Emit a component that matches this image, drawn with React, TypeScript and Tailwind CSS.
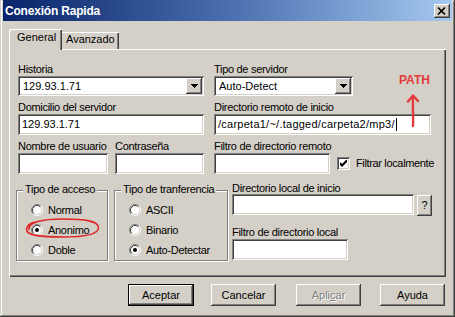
import React from "react";

const RAISED =
  "shadow-[inset_-1px_-1px_0_#404040,inset_1px_1px_0_#ffffff,inset_-2px_-2px_0_#808080,inset_2px_2px_0_#d4d0c8]";
const SUNKEN =
  "shadow-[inset_1px_1px_0_#808080,inset_-1px_-1px_0_#ffffff,inset_2px_2px_0_#404040,inset_-2px_-2px_0_#d4d0c8]";

function Label({ children, cls = "" }: { children: React.ReactNode; cls?: string }) {
  return (
    <div className={`h-[13px] leading-[13px] tracking-[-0.3px] whitespace-nowrap ${cls}`}>{children}</div>
  );
}

function Input({ cls, children }: { cls: string; children?: React.ReactNode }) {
  return (
    <div className={`h-[21px] bg-white ${SUNKEN} flex items-center pl-[4px] whitespace-nowrap overflow-hidden ${cls}`}>
      {children}
    </div>
  );
}

function DropBtn() {
  return (
    <div className={`w-[16px] h-[16px] bg-[#d4d0c8] ${RAISED} flex items-center justify-center shrink-0`}>
      <svg width="7" height="4" viewBox="0 0 7 4">
        <path d="M0 0H7V1H6V2H5V3H4V4H3V3H2V2H1V1H0Z" fill="#000" />
      </svg>
    </div>
  );
}

function Combo({ cls, value }: { cls: string; value: string }) {
  return (
    <div className={`h-[20px] bg-white ${SUNKEN} flex items-center p-[2px] ${cls}`}>
      <span className="flex-1 pl-[3px] whitespace-nowrap leading-[13px]">{value}</span>
      <DropBtn />
    </div>
  );
}

function Radio({ checked }: { checked?: boolean }) {
  return (
    <svg width="12" height="12" viewBox="0 0 12 12" className="shrink-0">
      <circle cx="6" cy="6" r="5" fill="#ffffff" />
      <path d="M9.89 2.11 A5.5 5.5 0 0 0 2.11 9.89" fill="none" stroke="#808080" strokeWidth="1" />
      <path d="M2.11 9.89 A5.5 5.5 0 0 0 9.89 2.11" fill="none" stroke="#ffffff" strokeWidth="1" />
      <path d="M9.18 2.82 A4.5 4.5 0 0 0 2.82 9.18" fill="none" stroke="#404040" strokeWidth="1" />
      <path d="M2.82 9.18 A4.5 4.5 0 0 0 9.18 2.82" fill="none" stroke="#d4d0c8" strokeWidth="1" />
      {checked && <circle cx="6" cy="6" r="2" fill="#000" />}
    </svg>
  );
}

function Group({
  cls,
  caption,
  items,
}: {
  cls: string;
  caption: string;
  items: { label: string; checked?: boolean }[];
}) {
  return (
    <div
      className={`relative mt-[8px] h-[71px] border border-[#808080] shadow-[inset_1px_1px_0_#ffffff,1px_1px_0_#ffffff] flex flex-col pt-[9px] pl-[14px] ${cls}`}
    >
      <div className="absolute left-[6px] top-[-8px] px-[2px] bg-[#d4d0c8] leading-[13px] tracking-[-0.3px] whitespace-nowrap">
        {caption}
      </div>
      {items.map((it) => (
        <div key={it.label} className="h-[20px] flex items-center gap-[5px] tracking-[-0.3px] whitespace-nowrap">
          <Radio checked={it.checked} />
          <span className="leading-[13px]">{it.label}</span>
        </div>
      ))}
    </div>
  );
}

function Btn({
  children,
  cls,
  def,
}: {
  children: React.ReactNode;
  cls: string;
  def?: boolean;
}) {
  if (def) {
    return (
      <div className={`h-[22px] border border-black ${cls}`}>
        <div className={`w-full h-full ${RAISED} flex items-center justify-center leading-[13px]`}>{children}</div>
      </div>
    );
  }
  return (
    <div className={`h-[22px] ${RAISED} flex items-center justify-center leading-[13px] ${cls}`}>{children}</div>
  );
}

export default function App() {
  return (
    <div
      className={`w-[455px] h-[317px] bg-[#d4d0c8] flex flex-col px-[3px] shadow-[inset_-1px_-1px_0_#404040,inset_1px_1px_0_#d4d0c8,inset_-2px_-2px_0_#808080,inset_2px_2px_0_#ffffff] font-['Liberation_Sans',Arial,Helvetica,sans-serif] text-[11px] text-black overflow-hidden`}
    >
      {/* Title bar */}
      <div className="h-[21px] shrink-0 flex items-center pl-[2px] pr-[2px] bg-linear-to-r from-[#0a246a] via-[#4a6eae] to-[#a6caf0]">
        <span className="flex-1 text-white font-bold text-[12px] tracking-[-0.2px] leading-[14px]">Conexión Rapida</span>
        <div className={`w-[16px] h-[14px] bg-[#d4d0c8] ${RAISED} flex items-center justify-center`}>
          <svg width="16" height="14" viewBox="0 0 16 14">
            <path d="M4 3.5 L11 10.5 M11 3.5 L4 10.5" stroke="#000" strokeWidth="1.7" />
          </svg>
        </div>
      </div>

      {/* Body */}
      <div className="flex flex-col pl-[6px] pr-[6px] pt-[8px]">
        {/* Tabs */}
        <div className="relative z-10 flex items-end h-[21px] -mb-[1px]">
          <div className="w-[53px] h-[21px] bg-[#d4d0c8] shadow-[inset_1px_1px_0_#ffffff,inset_-1px_0_0_#404040,inset_-2px_0_0_#808080] rounded-tl-[2px] pl-[8px] pt-[2px] leading-[13px]">
            General
          </div>
          <div className="w-[57px] h-[17px] mb-[1px] bg-[#d4d0c8] shadow-[inset_0_1px_0_#ffffff,inset_-1px_0_0_#404040,inset_-2px_0_0_#808080] pl-[4px] pt-[1px] leading-[13px]">
            Avanzado
          </div>
        </div>

        {/* Panel */}
        <div className="relative h-[228px] bg-[#d4d0c8] shadow-[inset_1px_1px_0_#ffffff,inset_-1px_-1px_0_#404040,inset_-2px_-2px_0_#808080] pt-[14px] pl-[9px]">
          <div className="flex flex-col gap-[5px]">
            <div className="flex gap-[10px]">
              <div className="flex flex-col">
                <Label>Historia</Label>
                <Combo cls="w-[186px]" value="129.93.1.71" />
              </div>
              <div className="flex flex-col">
                <Label>Tipo de servidor</Label>
                <Combo cls="w-[139px]" value="Auto-Detect" />
              </div>
            </div>
            <div className="flex gap-[10px]">
              <div className="flex flex-col">
                <Label>Domicilio del servidor</Label>
                <Input cls="w-[186px]">129.93.1.71</Input>
              </div>
              <div className="flex flex-col">
                <Label>Directorio remoto de inicio</Label>
                <Input cls="w-[217px] pl-[3px]">
                  <span className="tracking-[0.25px]">/carpeta1/~/.tagged/carpeta2/mp3/</span>
                  <span className="inline-block w-[1px] h-[13px] bg-black ml-[1px]" />
                </Input>
              </div>
            </div>
            <div className="flex gap-[10px]">
              <div className="flex gap-[7px]">
                <div className="flex flex-col">
                  <Label>Nombre de usuario</Label>
                  <Input cls="w-[90px]" />
                </div>
                <div className="flex flex-col">
                  <Label>Contraseña</Label>
                  <Input cls="w-[89px]" />
                </div>
              </div>
              <div className="flex flex-col">
                <Label>Filtro de directorio remoto</Label>
                <div className="flex items-center">
                  <Input cls="w-[116px]" />
                  <div className={`ml-[7px] w-[13px] h-[13px] bg-white ${SUNKEN} flex items-center justify-center`}>
                    <svg width="7" height="7" viewBox="0 0 7 7">
                      <polygon points="0,2 2,4 7,-1 7,2 2,7 0,5" fill="#000" />
                    </svg>
                  </div>
                  <span className="ml-[6px] tracking-[-0.35px] whitespace-nowrap leading-[13px]">Filtrar localmente</span>
                </div>
              </div>
            </div>
          </div>

          {/* Lower section */}
          <div className="flex mt-[8px] -ml-[2px]">
            <Group
              cls="w-[92px]"
              caption="Tipo de acceso"
              items={[{ label: "Normal" }, { label: "Anonimo", checked: true }, { label: "Doble" }]}
            />
            <Group
              cls="w-[114px] ml-[6px]"
              caption="Tipo de tranferencia"
              items={[{ label: "ASCII" }, { label: "Binario" }, { label: "Auto-Detectar", checked: true }]}
            />
            <div className="ml-[4px] flex flex-col">
              <div className="h-[12px] leading-[12px] tracking-[-0.3px] whitespace-nowrap">Directorio local de inicio</div>
              <div className="flex items-start gap-[3px]">
                <Input cls="w-[182px]" />
                <div className={`mt-[1px] w-[15px] h-[21px] ${RAISED} flex items-center justify-center leading-[13px]`}>?</div>
              </div>
              <Label cls="mt-[10px]">Filtro de directorio local</Label>
              <Input cls="w-[116px]" />
            </div>
          </div>

          {/* Annotations */}
          <div className="absolute left-[390px] top-[25px] text-[#e23b3b] font-bold text-[12px] leading-[13px]">PATH</div>
          <svg className="absolute left-[396px] top-[43px]" width="16" height="36" viewBox="0 0 16 36">
            <path d="M8 34 C8.5 25 7.5 14 8 5" stroke="#e23b3b" strokeWidth="2.4" fill="none" strokeLinecap="round" />
            <path d="M3 9.5 L8 3.5 L13 9" stroke="#e23b3b" strokeWidth="2.4" fill="none" strokeLinecap="round" strokeLinejoin="round" />
          </svg>
          <svg className="absolute left-[14px] top-[167px]" width="80" height="24" viewBox="0 0 80 24">
            <path
              d="M6 14 C4 6 20 3 40 3 C62 3 76 5 75.5 12 C75 19 60 21 40 21 C20 21 3 20 3.5 13 C4 9 8 7 12 6"
              stroke="#e02424"
              strokeWidth="1.6"
              fill="none"
            />
          </svg>
        </div>

        {/* Buttons */}
        <div className="flex mt-[7px]">
          <Btn cls="w-[66px] ml-[119px]" def>
            Aceptar
          </Btn>
          <Btn cls="w-[65px] ml-[17px]">Cancelar</Btn>
          <Btn cls="w-[65px] ml-[20px] text-[#808080] [text-shadow:1px_1px_0_#ffffff]">
            <span>
              Apli<span className="underline">c</span>ar
            </span>
          </Btn>
          <Btn cls="w-[65px] ml-[19px]">Ayuda</Btn>
        </div>
      </div>
    </div>
  );
}
